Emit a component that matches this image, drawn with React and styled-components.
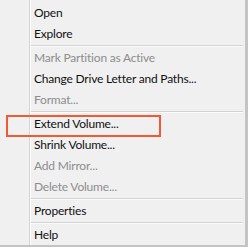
import React from 'react';
import styled, { createGlobalStyle } from 'styled-components';

const GlobalStyle = createGlobalStyle`
  html, body {
    margin: 0;
    padding: 0;
    background: #f0f0f0;
    overflow: hidden;
  }
`;

const MenuBlock = styled.div`
  position: relative;
  box-sizing: border-box;
  width: 248px;
  height: 247px;
  padding-top: 2px;
  background: #f0f0f0;
  border-right: 3px solid #c4c4c4;
  border-bottom: 2px solid #c4c4c4;
  font-family: Lato, 'Noto Sans', 'Liberation Sans', sans-serif;
  font-size: 12px;
  letter-spacing: -0.2px;
  overflow: hidden;
  display: flex;
  flex-direction: column;
  &::before {
    content: '';
    position: absolute;
    top: 0;
    bottom: 0;
    left: 29px;
    width: 1px;
    background: #d5d5d5;
    border-right: 1px solid #ffffff;
  }
`;

const Item = styled.div`
  height: 21px;
  line-height: 21px;
  padding-left: 34px;
  color: ${(p) => (p.disabled ? '#8d8d8d' : '#111')};
  white-space: nowrap;
`;

const Separator = styled.div`
  height: 4px;
  display: flex;
  align-items: center;
  padding-left: 30px;
  padding-right: 2px;
  &::after {
    content: '';
    flex: 1;
    height: 1px;
    background: #d3d3d3;
    border-bottom: 1px solid #fbfbfb;
  }
`;

const Highlight = styled.div`
  position: absolute;
  left: 6px;
  top: 115px;
  width: 155px;
  height: 22px;
  border: 2px solid #f05a35;
  box-sizing: border-box;
  pointer-events: none;
`;

const menu = [
  ['Open'],
  ['Explore'],
  null,
  ['Mark Partition as Active', true],
  ['Change Drive Letter and Paths...'],
  ['Format...', true],
  null,
  ['Extend Volume...'],
  ['Shrink Volume...'],
  ['Add Mirror...', true],
  ['Delete Volume...', true],
  null,
  ['Properties'],
  null,
  ['Help'],
];

const App = () => {
  return (
    <>
      <GlobalStyle />
      <MenuBlock>
        {menu.map((entry, i) =>
          entry ? (
            <Item key={i} disabled={entry[1]}>
              {entry[0]}
            </Item>
          ) : (
            <Separator key={i} />
          )
        )}
        <Highlight />
      </MenuBlock>
    </>
  );
};

export default App;
